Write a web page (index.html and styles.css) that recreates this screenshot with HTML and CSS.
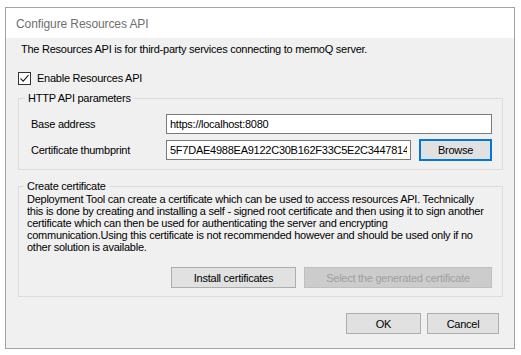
FILE: index.html
```html
<!DOCTYPE html>
<html lang="en">
<head>
  <meta charset="UTF-8" />
  <title>Configure Resources API</title>
  <link rel="stylesheet" href="styles.css">
</head>
<body>

  <div class="window">
    <div class="title-bar">Configure Resources API</div>

    <div class="client">
      <p class="intro">The Resources API is for third-party services connecting to memoQ server.</p>

      <label class="check-row">
        <span class="check-box">
          <svg width="11" height="11" viewBox="0 0 11 11">
            <path d="M1.5 5.5 L4.2 8.2 L9.5 2.2" fill="none" stroke="#222" stroke-width="1.1" />
          </svg>
        </span>
        Enable Resources API
      </label>

      <fieldset class="group group-http">
        <legend>HTTP API parameters</legend>
        <div class="field-row">
          <span class="field-label">Base address</span>
          <input class="text-box wide" type="text" value="https://localhost:8080" />
        </div>
        <div class="field-row">
          <span class="field-label">Certificate thumbprint</span>
          <input class="text-box" type="text" value="5F7DAE4988EA9122C30B162F33C5E2C344781432AB90" />
          <button class="btn btn-browse" type="button">Browse</button>
        </div>
      </fieldset>

      <fieldset class="group group-cert">
        <legend>Create certificate</legend>
        <p class="cert-text">
          Deployment Tool can create a certificate which can be used to access resources API. Technically<br>
          this is done by creating and installing a self - signed root certificate and then using it to sign another<br>
          certificate which can then be used for authenticating the server and encrypting<br>
          communication.Using this certificate is not recommended however and should be used only if no<br>
          other solution is available.
        </p>
        <div class="cert-actions">
          <button class="btn btn-install" type="button">Install certificates</button>
          <button class="btn btn-select" type="button" disabled>Select the generated certificate</button>
        </div>
      </fieldset>

      <div class="dialog-actions">
        <button class="btn btn-ok" type="button">OK</button>
        <button class="btn btn-cancel" type="button">Cancel</button>
      </div>
    </div>
  </div>

</body>
</html>
```

FILE: styles.css
```css
* {
  box-sizing: border-box;
}

body {
  margin: 0;
  padding: 7px 0 0 5px;
  background: #fff;
  font-family: 'Liberation Sans', Arial, sans-serif;
  font-size: 11px;
  letter-spacing: -0.25px;
  color: #000;
}

.window {
  width: 510px;
  border: 1px solid #a3a3a3;
  background: #f0f0f0;
}

.title-bar {
  height: 30px;
  display: flex;
  align-items: center;
  padding: 2px 0 0 10px;
  background: #fff;
  color: #6f6f6f;
  font-size: 12px;
  letter-spacing: -0.1px;
}

.client {
  padding: 4px 11px 14px 12px;
}

.intro {
  margin: 0;
  padding-left: 3px;
  line-height: 14px;
}

.check-row {
  display: flex;
  align-items: center;
  gap: 6px;
  height: 16px;
  margin-top: 14px;
}

.check-box {
  width: 13px;
  height: 13px;
  border: 1px solid #333;
  background: #fff;
  display: flex;
  align-items: center;
  justify-content: center;
}

.group {
  margin: 0;
  padding: 0;
  border: 1px solid #dcdcdc;
  min-width: 0;
}

.group legend {
  padding: 0 3px;
  line-height: 13px;
}

.group-http {
  margin-top: 6px;
  padding: 9px 9px 8px 12px;
}

.group-http legend {
  margin-left: -6px;
}

.field-row {
  display: flex;
  align-items: center;
}

.field-row + .field-row {
  margin-top: 5px;
}

.field-label {
  width: 135px;
}

.text-box {
  width: 245px;
  height: 20px;
  border: 1px solid #7a7a7a;
  background: #fff;
  padding: 0 3px;
  font-family: inherit;
  font-size: 11px;
  letter-spacing: -0.25px;
  color: #000;
  outline: none;
}

.text-box.wide {
  width: 326px;
}

.btn {
  height: 21px;
  border: 1px solid #adadad;
  background: #e1e1e1;
  font-family: inherit;
  font-size: 11px;
  letter-spacing: -0.25px;
  color: #000;
  padding: 0;
}

.btn-browse {
  width: 73px;
  height: 22px;
  margin-left: 8px;
  border: 2px solid #0078d7;
}

.group-cert {
  margin-top: 10px;
  padding: 0 10px 8px 8px;
}

.group-cert legend {
  margin-left: -3px;
}

.cert-text {
  margin: 0;
  line-height: 12px;
  white-space: nowrap;
}

.cert-actions {
  display: flex;
  justify-content: flex-end;
  gap: 8px;
  margin-top: 14px;
}

.btn-install {
  width: 125px;
}

.btn-select {
  width: 188px;
  background: #cccccc;
  border-color: #bfbfbf;
  color: #a0a0a0;
}

.dialog-actions {
  display: flex;
  justify-content: flex-end;
  gap: 6px;
  margin-top: 16px;
  padding-right: 4px;
}

.btn-ok {
  width: 75px;
}

.btn-cancel {
  width: 72px;
}
```
